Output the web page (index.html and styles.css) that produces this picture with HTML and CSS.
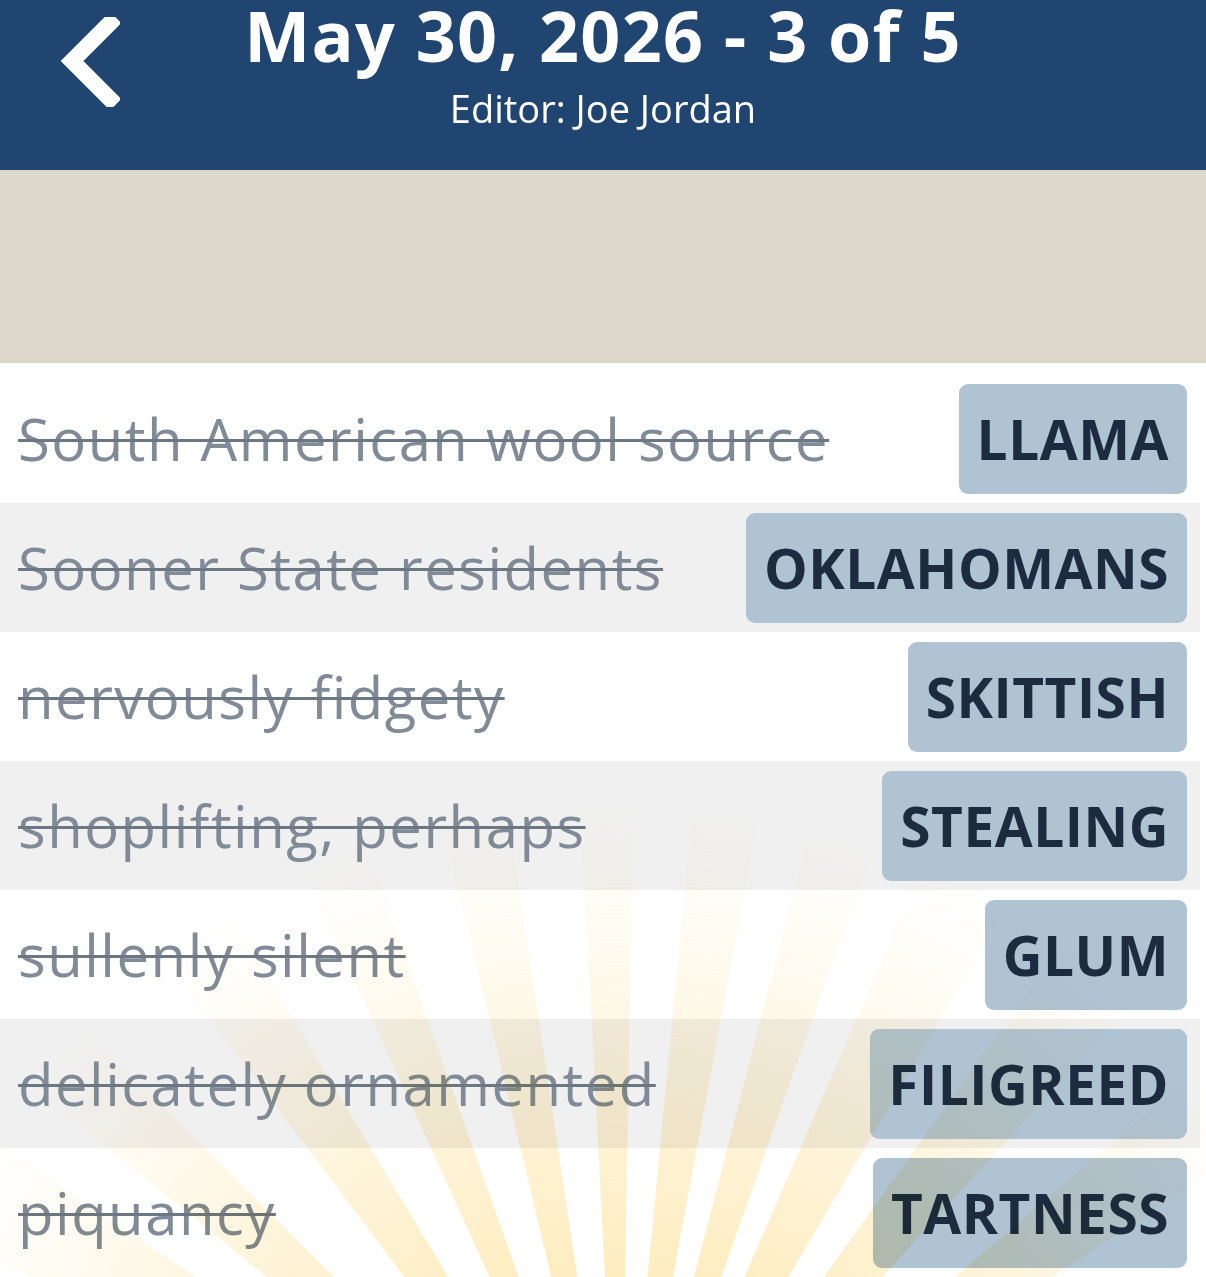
FILE: index.html
```html
<!DOCTYPE html>
<html lang="en">
<head>
    <meta charset="UTF-8">
    <meta name="viewport" content="width=device-width, initial-scale=1.0">
    <title>May 30, 2026 - 3 of 5</title>
    <link rel="stylesheet" href="styles.css">
</head>
<body>
    <header class="puzzle-header">
        <a href="#" class="back-button" aria-label="Back">
            <svg viewBox="0 0 60 90" width="60" height="90">
                <path d="M50 6 L12 44 L50 82" fill="none" stroke="#ffffff" stroke-width="16" stroke-linecap="square" stroke-linejoin="miter"/>
            </svg>
        </a>
        <div class="header-text">
            <h1>May 30, 2026 - 3 of 5</h1>
            <p class="editor">Editor: Joe Jordan</p>
        </div>
    </header>

    <div class="board-area"></div>

    <main class="clue-list">
        <div class="clue-row">
            <span class="clue">South American wool source</span>
            <span class="answer">LLAMA</span>
        </div>
        <div class="clue-row">
            <span class="clue">Sooner State residents</span>
            <span class="answer">OKLAHOMANS</span>
        </div>
        <div class="clue-row">
            <span class="clue">nervously fidgety</span>
            <span class="answer">SKITTISH</span>
        </div>
        <div class="clue-row">
            <span class="clue">shoplifting, perhaps</span>
            <span class="answer">STEALING</span>
        </div>
        <div class="clue-row">
            <span class="clue">sullenly silent</span>
            <span class="answer">GLUM</span>
        </div>
        <div class="clue-row">
            <span class="clue">delicately ornamented</span>
            <span class="answer">FILIGREED</span>
        </div>
        <div class="clue-row">
            <span class="clue">piquancy</span>
            <span class="answer">TARTNESS</span>
        </div>

        <!-- celebration burst behind the solved list -->
        <svg class="sunburst" viewBox="0 0 1206 914" preserveAspectRatio="none">
            <defs>
                <radialGradient id="rayFade" gradientUnits="userSpaceOnUse" cx="620" cy="1200" r="760">
                    <stop offset="0.3" stop-color="#fbd46a" stop-opacity="0.5"/>
                    <stop offset="0.65" stop-color="#fcdc86" stop-opacity="0.28"/>
                    <stop offset="1" stop-color="#fde6a8" stop-opacity="0"/>
                </radialGradient>
            </defs>
            <g fill="url(#rayFade)" id="rays"></g>
        </svg>
    </main>

    <script>
        // Rays: [angle from vertical, width] in degrees
        const rays = [[-74, 7], [-60, 8], [-48, 6], [-34, 6], [-22, 5], [-11, 5], [-1, 4], [8, 5], [17, 5], [27, 7], [39, 7], [53, 7], [67, 6]];
        const cx = 620, cy = 1200, len = 1600;
        const group = document.getElementById('rays');
        rays.forEach(([a, w]) => {
            const p = [a - w / 2, a + w / 2].map(d => {
                const r = d * Math.PI / 180;
                return (cx + Math.sin(r) * len).toFixed(1) + ',' + (cy - Math.cos(r) * len).toFixed(1);
            });
            const poly = document.createElementNS('http://www.w3.org/2000/svg', 'polygon');
            poly.setAttribute('points', cx + ',' + cy + ' ' + p.join(' '));
            group.appendChild(poly);
        });
    </script>
</body>
</html>
```

FILE: styles.css
```css
body {
    margin: 0;
    padding: 0;
    font-family: 'Open Sans', 'Noto Sans', sans-serif;
    background: #ffffff;
    overflow: hidden;
}

.puzzle-header {
    height: 170px;
    background: #1f4570;
    color: white;
    display: flex;
    align-items: flex-start;
    position: relative;
}

.back-button {
    display: block;
    width: 60px;
    height: 90px;
    margin: 17px 0 0 60px;
}

.back-button svg {
    display: block;
}

.header-text {
    position: absolute;
    left: 0;
    right: 0;
    top: 0;
    padding-top: 2px;
    text-align: center;
    pointer-events: none;
}

.header-text h1 {
    margin: 0;
    font-size: 70px;
    line-height: 66px;
    font-weight: 700;
    letter-spacing: 1.3px;
}

.header-text .editor {
    margin: 20px 0 0;
    font-size: 38px;
    line-height: 40px;
    font-weight: 400;
}

.board-area {
    height: 193px;
    background: #ddd8cb;
}

.clue-list {
    position: relative;
    padding: 11px 6px 0 0;
}

.clue-row {
    height: 129px;
    display: flex;
    align-items: center;
    justify-content: space-between;
    padding: 0 13px 0 18px;
    box-sizing: border-box;
}

.clue-row:nth-child(even) {
    background: #f0f0f0;
}

.clue {
    font-size: 58px;
    letter-spacing: 1.5px;
    color: #808b97;
    text-decoration: line-through;
    text-decoration-color: #6b7783;
    text-decoration-thickness: 3px;
    white-space: nowrap;
}

.answer {
    height: 110px;
    display: flex;
    align-items: center;
    padding: 0 18px;
    background: #b0c3d3;
    border-radius: 9px;
    color: #1c2b3f;
    font-size: 55px;
    font-weight: 700;
    letter-spacing: 0.5px;
    white-space: nowrap;
}

.sunburst {
    position: absolute;
    left: 0;
    top: 0;
    width: 1206px;
    height: 914px;
    pointer-events: none;
    mix-blend-mode: multiply;
}
```
